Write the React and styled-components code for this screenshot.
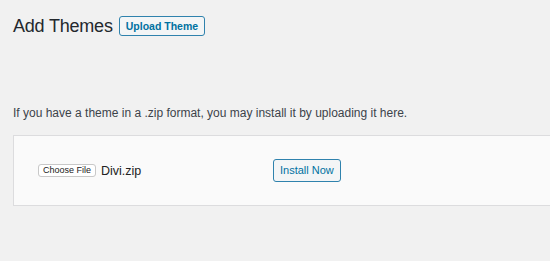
import React from "react";
import styled, { createGlobalStyle } from "styled-components";

const Global = createGlobalStyle`
  html, body { margin: 0; padding: 0; background: #f1f1f1; overflow: hidden; }
  body { font-family: "Liberation Sans", Arial, sans-serif; color: #23282d; }
`;

const Page = styled.div`
  padding: 13px 0 0 13px;
  width: 550px;
  box-sizing: border-box;
`;

const Header = styled.div`
  display: flex;
  align-items: center;
  gap: 6px;
  height: 26px;
`;

const Title = styled.h1`
  margin: 0;
  font-size: 18px;
  font-weight: 400;
  letter-spacing: -0.2px;
  color: #23282d;
  line-height: 26px;
`;

const OutlineButton = styled.button`
  font-family: "Liberation Sans", Arial, sans-serif;
  box-sizing: border-box;
  height: ${(p) => p.$h}px;
  padding: 0 ${(p) => p.$px}px;
  font-size: ${(p) => p.$fs}px;
  font-weight: ${(p) => (p.$bold ? 700 : 400)};
  color: #0071a1;
  background: #f3f5f6;
  border: 1px solid #2f82ad;
  border-radius: 3px;
  line-height: 1;
  cursor: pointer;
`;

const Intro = styled.p`
  margin: 66px 0 0 0;
  font-size: 12px;
  line-height: 16px;
  color: #3c434a;
`;

const Card = styled.div`
  margin: 14px -20px 0 0;
  height: 71px;
  box-sizing: border-box;
  background: #fafafa;
  border: 1px solid #dcdcde;
  display: flex;
  align-items: center;
  padding: 0 0 0 24px;
`;

const FileField = styled.div`
  width: 235px;
  display: flex;
  align-items: center;
  gap: 5px;
`;

const ChooseButton = styled.span`
  box-sizing: border-box;
  height: 13px;
  padding: 0 4px;
  font-size: 9px;
  line-height: 11px;
  color: #222;
  background: #fff;
  border: 1px solid #c8c8c8;
  border-radius: 3px;
  display: inline-flex;
  align-items: center;
`;

const FileName = styled.span`
  font-size: 12.5px;
  color: #222;
`;

export default function App() {
  return (
    <>
      <Global />
      <Page>
        <Header>
          <Title>Add Themes</Title>
          <OutlineButton $h={20} $px={6} $fs={10.5} $bold>
            Upload Theme
          </OutlineButton>
        </Header>
        <Intro>
          If you have a theme in a .zip format, you may install it by uploading
          it here.
        </Intro>
        <Card>
          <FileField>
            <ChooseButton>Choose File</ChooseButton>
            <FileName>Divi.zip</FileName>
          </FileField>
          <OutlineButton $h={23} $px={6} $fs={11}>
            Install Now
          </OutlineButton>
        </Card>
      </Page>
    </>
  );
}
